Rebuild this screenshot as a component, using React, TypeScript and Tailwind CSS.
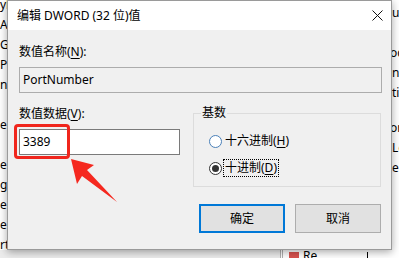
import React from 'react'

const leftLines = ['yl', 'A', 'G', 'P', 'n', '', 'er', '', 'er', 'g', 'e', 'el', 'rt']

function U({ children }: { children: React.ReactNode }) {
  return <span className="underline underline-offset-2">{children}</span>
}

function Radio({ checked }: { checked?: boolean }) {
  return (
    <span
      className={
        checked
          ? 'flex items-center justify-center w-[13px] h-[13px] rounded-full border border-[#333333] bg-white'
          : 'flex items-center justify-center w-[13px] h-[13px] rounded-full border border-[#4a80b8] bg-white'
      }
    >
      {checked && <span className="block w-[7px] h-[7px] rounded-full bg-[#333333]" />}
    </span>
  )
}

export default function App() {
  return (
    <div className="relative w-[399px] h-[258px] overflow-hidden bg-white text-black text-[12px] font-['Noto_Sans','Noto_Sans_CJK_SC',sans-serif]">
      <div className="flex h-[250px]">
        {/* regedit behind, left edge */}
        <div className="w-[7px] shrink-0 overflow-hidden mt-[-5px]">
          {leftLines.map((t, i) => (
            <div key={i} className="h-[20px] leading-[20px] whitespace-nowrap">
              {t}
            </div>
          ))}
        </div>

        {/* dialog */}
        <div className="relative z-10 w-[385px] shrink-0 flex flex-col border border-[#9a9a9a] bg-[#f0f0f0] shadow-[0_2px_8px_rgba(0,0,0,0.35)]">
          <div className="h-[29px] flex items-center justify-between bg-white pl-[9px] pr-[8px]">
            <span className="text-[12px]">编辑 DWORD (32 位)值</span>
            <svg width="11" height="11" viewBox="0 0 11 11" fill="none" stroke="#111" strokeWidth="1">
              <path d="M0.5 0.5L10.5 10.5M10.5 0.5L0.5 10.5" />
            </svg>
          </div>

          <div className="flex flex-col pl-[11px] pr-[9px] pt-[14px]">
            <div className="h-[16px] leading-[16px]">
              数值名称(<U>N</U>):
            </div>
            <div className="mt-[7px] h-[26px] flex items-center px-[3px] border border-[#acacac] bg-[#f0f0f0]">
              PortNumber
            </div>

            <div className="mt-[12px] flex items-start gap-[13px]">
              <div className="w-[161px] flex flex-col">
                <div className="mt-[1px] h-[16px] leading-[16px]">
                  数值数据(<U>V</U>):
                </div>
                <div className="mt-[7px] h-[26px] flex items-center px-[3px] border border-[#7a7a7a] bg-white">
                  3389
                </div>
              </div>

              <fieldset className="w-[188px] h-[82px] border border-[#dcdcdc] pl-[15px]">
                <legend className="ml-[-8px] px-[1px] h-[16px] leading-[16px]">基数</legend>
                <div className="mt-[12px] flex items-center gap-[3px] h-[16px]">
                  <Radio />
                  <span>
                    十六进制(<U>H</U>)
                  </span>
                </div>
                <div className="mt-[11px] flex items-center gap-[1px] h-[16px]">
                  <Radio checked />
                  <span className="h-[18px] leading-[16px] px-[1px] border border-dotted border-black">
                    十进制(<U>D</U>)
                  </span>
                </div>
              </fieldset>
            </div>

            <div className="mt-[17px] flex justify-end gap-[10px] pr-[1px]">
              <div className="w-[86px] h-[29px] flex items-center justify-center border-2 border-[#0078d7] bg-[#e1e1e1]">
                确定
              </div>
              <div className="w-[86px] h-[29px] flex items-center justify-center border border-[#adadad] bg-[#e1e1e1]">
                取消
              </div>
            </div>
          </div>
        </div>

        {/* regedit behind, right edge */}
        <div className="w-[7px] shrink-0 overflow-hidden flex flex-col">
          <div className="mt-[4px] h-[18px] leading-[18px]">u</div>
          <div className="mt-[21px] h-[20px] leading-[20px] ml-[-2px] whitespace-nowrap">oc</div>
          <div className="h-[20px] leading-[20px]">n</div>
          <div className="h-[20px] leading-[20px] whitespace-nowrap">ti</div>
          <div className="mt-[15px] h-[20px] leading-[20px] ml-[-2px] whitespace-nowrap">or</div>
          <div className="h-[20px] leading-[20px] whitespace-nowrap">Le</div>
          <div className="h-[20px] leading-[20px]">e</div>
        </div>
      </div>

      {/* bottom strip of regedit */}
      <div className="flex h-[8px] bg-[#ececec]">
        <div className="w-[280px] shrink-0" />
        <div className="w-[3px] shrink-0 border-l border-r border-[#b0b0b0] bg-white" />
        <div className="flex-1 flex items-start gap-[4px] bg-white pl-[6px]">
          <span className="mt-[2px] block w-[10px] h-[6px] bg-[#d9534f]" />
          <span className="leading-[12px] text-[12px]">Re</span>
          <span className="ml-[46px] mt-[2px] block w-[1px] h-[6px] bg-black" />
        </div>
      </div>

      {/* red highlight annotation */}
      <div className="absolute left-[14px] top-[124px] w-[56px] h-[35px] rounded-[4px] border-[3px] border-[#f0261d] z-20" />
      <svg className="absolute left-0 top-0 z-20" width="399" height="258" viewBox="0 0 399 258">
        <polygon points="71,159 94,165 87,170 117,202 82,176 77,184" fill="#f5281f" />
      </svg>
    </div>
  )
}
